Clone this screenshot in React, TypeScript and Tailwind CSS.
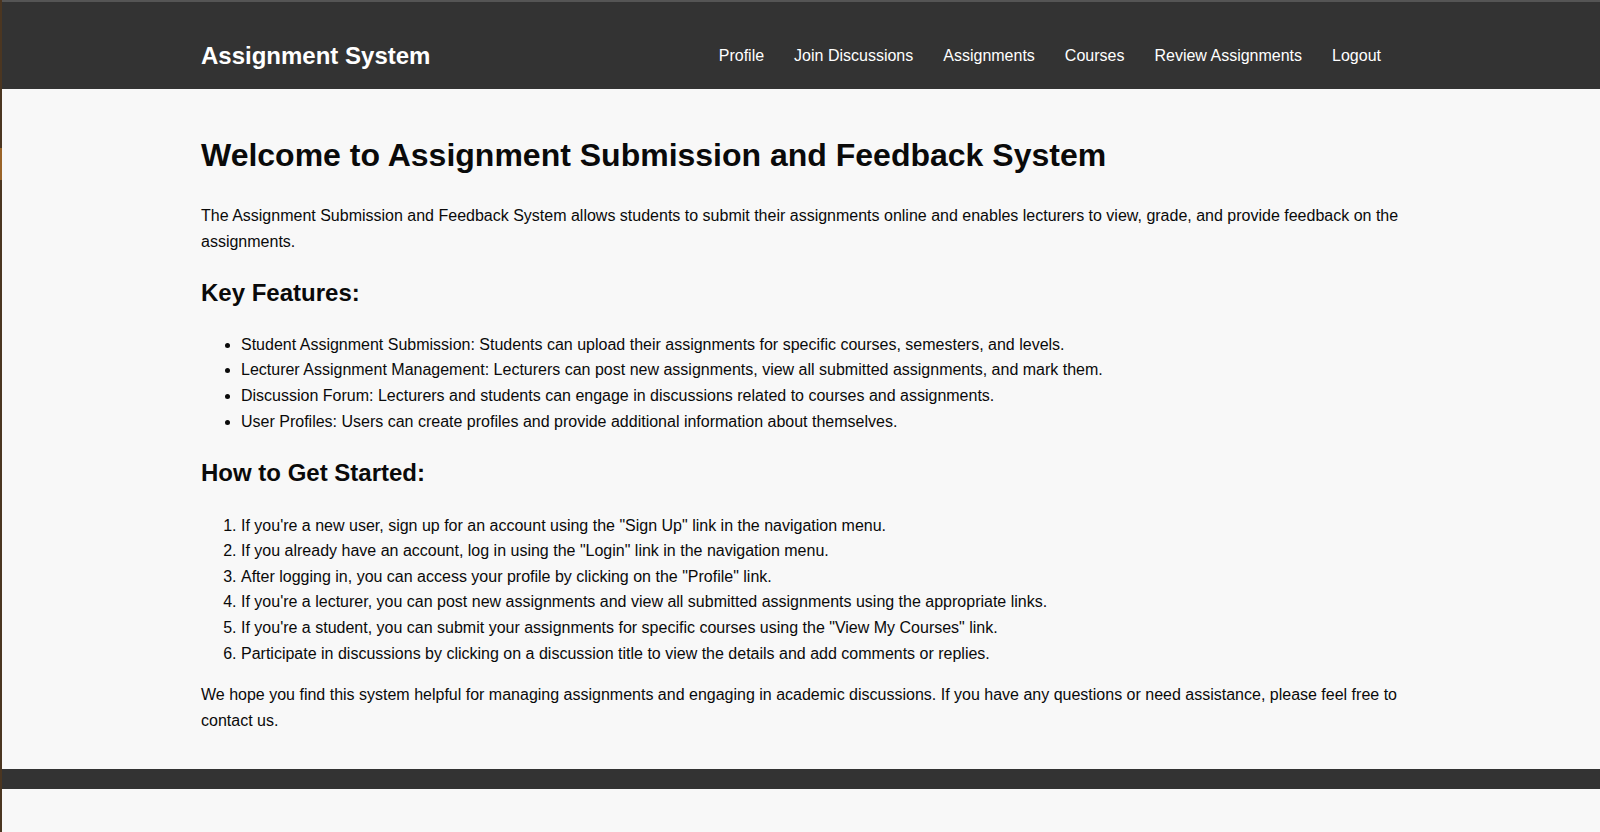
const navLinks = ["Profile", "Join Discussions", "Assignments", "Courses", "Review Assignments", "Logout"];

const features = [
  "Student Assignment Submission: Students can upload their assignments for specific courses, semesters, and levels.",
  "Lecturer Assignment Management: Lecturers can post new assignments, view all submitted assignments, and mark them.",
  "Discussion Forum: Lecturers and students can engage in discussions related to courses and assignments.",
  "User Profiles: Users can create profiles and provide additional information about themselves.",
];

const steps = [
  'If you\'re a new user, sign up for an account using the "Sign Up" link in the navigation menu.',
  'If you already have an account, log in using the "Login" link in the navigation menu.',
  'After logging in, you can access your profile by clicking on the "Profile" link.',
  "If you're a lecturer, you can post new assignments and view all submitted assignments using the appropriate links.",
  'If you\'re a student, you can submit your assignments for specific courses using the "View My Courses" link.',
  "Participate in discussions by clicking on a discussion title to view the details and add comments or replies.",
];

export default function App() {
  return (
    <div className="flex min-h-[832px] bg-[#f8f8f8] text-[#0a0a0a] font-['Liberation_Sans',Arial,sans-serif] text-[16px] leading-[1.6]">
      {/* window edge */}
      <div className="w-[2px] flex flex-col">
        <div className="h-[148px] bg-[#4b3621]" />
        <div className="h-[32px] bg-[#9a6428]" />
        <div className="flex-1 bg-[#4b3621]" />
      </div>

      <div className="flex-1 flex flex-col">
        <div className="h-[2px] bg-[#555]" />

        {/* header */}
        <header className="h-[87px] pt-[20px] bg-[#333] text-white">
          <div className="w-[1200px] mx-auto h-full flex items-center justify-between">
            <h1 className="text-[24px] font-bold mt-[2px]">Assignment System</h1>
            <nav className="flex gap-[30px] mr-[20px]">
              {navLinks.map((l) => (
                <a key={l} href="#" className="text-[16px]">
                  {l}
                </a>
              ))}
            </nav>
          </div>
        </header>

        {/* main content */}
        <main className="w-[1200px] mx-auto pt-[20px] pb-[20px]">
          <h2 className="text-[32px] font-bold mt-[21px] mb-[22px] leading-[1.6]">
            Welcome to Assignment Submission and Feedback System
          </h2>
          <p className="my-4">
            The Assignment Submission and Feedback System allows students to submit their assignments online and enables
            lecturers to view, grade, and provide feedback on the assignments.
          </p>

          <h3 className="text-[24px] font-bold mt-[20px] mb-[19px]">Key Features:</h3>
          <ul className="list-disc pl-[40px] mt-[19px] mb-[20px]">
            {features.map((f) => (
              <li key={f}>{f}</li>
            ))}
          </ul>

          <h3 className="text-[24px] font-bold mt-[20px] mb-[20px]">How to Get Started:</h3>
          <ol className="list-decimal pl-[40px] mt-[20px] mb-[16px]">
            {steps.map((s) => (
              <li key={s}>{s}</li>
            ))}
          </ol>

          <p className="mt-[16px] mb-4">
            We hope you find this system helpful for managing assignments and engaging in academic discussions. If you have
            any questions or need assistance, please feel free to contact us.
          </p>
        </main>

        <footer className="h-[20px] bg-[#333]" />
        <div className="flex-1" />
      </div>
    </div>
  );
}
